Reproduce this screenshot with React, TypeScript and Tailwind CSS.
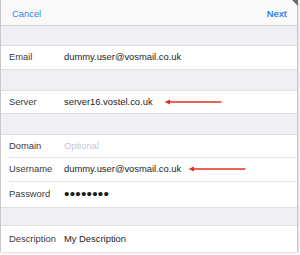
const font = { fontFamily: '"Liberation Sans", Arial, sans-serif' };

function Arrow() {
  return (
    <svg width="58" height="6" viewBox="0 0 58 6" className="shrink-0">
      <path d="M4 3 H57" stroke="#e5321f" strokeWidth="1.4" strokeLinecap="round" />
      <path d="M0.5 3 L6 0.6 L6 5.4 Z" fill="#e5321f" />
    </svg>
  );
}

function Row({
  label,
  value,
  h,
  placeholder,
  arrow,
  arrowGap,
  sep,
}: {
  label: string;
  value: React.ReactNode;
  h: string;
  placeholder?: boolean;
  arrow?: boolean;
  arrowGap?: string;
  sep?: boolean;
}) {
  return (
    <div className={`flex items-stretch bg-white pl-[8px] ${h}`}>
      <div className={`flex flex-1 items-center ${sep ? "border-b border-[#e3e3e6]" : ""}`}>
        <div className="w-[55px] shrink-0 text-[9.4px] text-[#3a3a3c]">{label}</div>
        <div className={`text-[9.4px] ${placeholder ? "text-[#c7c7cd]" : "text-[#1c1c1e]"}`}>{value}</div>
        {arrow && <div className={arrowGap}><Arrow /></div>}
      </div>
    </div>
  );
}

export default function App() {
  return (
    <div className="h-[255px] w-[300px] overflow-hidden bg-white" style={font}>
      <div className="relative h-[252px] w-[298px] border-r border-b border-l border-[#c9c9cc] bg-[#efeff4] shadow-[1px_1px_2px_rgba(0,0,0,0.15)]">
        <svg className="absolute right-[-1px] top-0" width="6" height="6" viewBox="0 0 6 6">
          <path d="M0 0 H6 V6 Z" fill="#6b6b6b" />
        </svg>
        <div className="flex h-[26px] items-center justify-between border-b border-[#d4d4d8] bg-[#f9f9f9] pt-[3px] pl-[11px] pr-[10px]">
          <span className="text-[9.4px] text-[#2f86f0]">Cancel</span>
          <span className="text-[9.4px] font-semibold text-[#2f86f0]">Next</span>
        </div>
        <div className="h-[19px]" />
        <div className="border-y border-[#dedee2]">
          <Row label="Email" value="dummy.user@vosmail.co.uk" h="h-[23px]" />
        </div>
        <div className="h-[20px]" />
        <div className="border-y border-[#dedee2]">
          <Row label="Server" value="server16.vostel.co.uk" h="h-[22px]" arrow arrowGap="ml-[11px]" />
        </div>
        <div className="h-[20px]" />
        <div className="border-y border-[#dedee2]">
          <Row label="Domain" value="Optional" placeholder h="h-[23px]" sep />
          <Row label="Username" value="dummy.user@vosmail.co.uk" h="h-[24px]" sep arrow arrowGap="ml-[7px] -mt-[1px]" />
          <Row
            label="Password"
            value={<span className="text-[15.5px] leading-none tracking-[0.2px]">••••••••</span>}
            h="h-[25px]"
          />
        </div>
        <div className="h-[17px]" />
        <div className="border-t border-[#dedee2]">
          <Row label="Description" value="My Description" h="h-[26px]" />
        </div>
      </div>
    </div>
  );
}
